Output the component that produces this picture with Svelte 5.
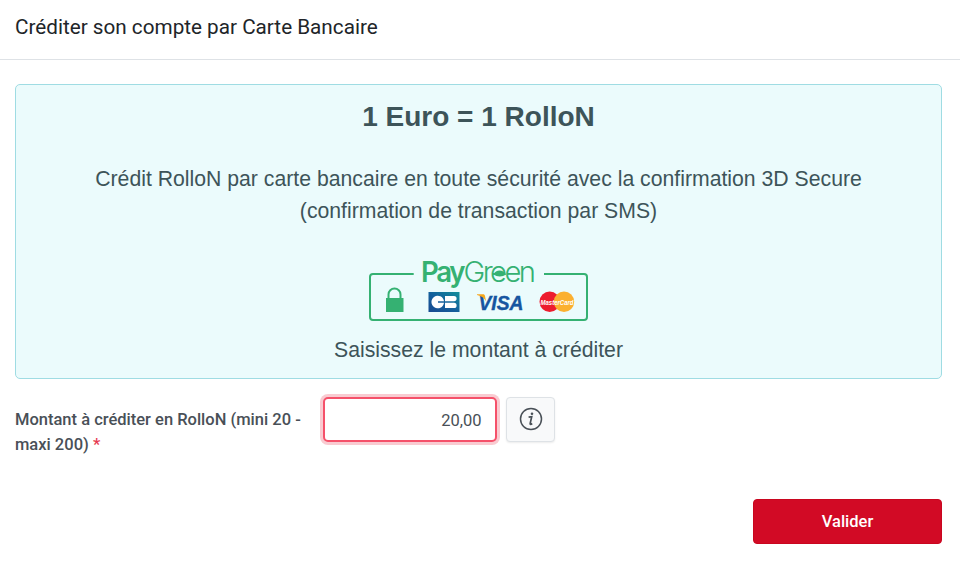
<script lang="ts">
  let amount = $state("20,00");

  function submitCredit(evt: SubmitEvent) {
    evt.preventDefault();
  }
</script>

<header class="modal-header">
  <h1>Créditer son compte par Carte Bancaire</h1>
</header>

<form class="modal-body" onsubmit={submitCredit}>
  <section class="notice">
    <h2>1 Euro = 1 RolloN</h2>
    <p>
      Crédit RolloN par carte bancaire en toute sécurité avec la confirmation 3D Secure<br />
      (confirmation de transaction par SMS)
    </p>
    <svg class="paygreen" width="220" height="64" viewBox="0 0 220 64" role="img" aria-label="PayGreen">
      <defs>
        <linearGradient id="cb" x1="0" x2="1" y1="1" y2="0">
          <stop offset="0" stop-color="#174a91" />
          <stop offset="0.5" stop-color="#14609c" />
          <stop offset="1" stop-color="#12909a" />
        </linearGradient>
      </defs>
      <path class="frame" d="M45.700 16H5a3 3 0 0 0-3 3v40a3 3 0 0 0 3 3h211a3 3 0 0 0 3-3V19a3 3 0 0 0-3-3h-40" />

      <text class="pay" x="53" y="24.300" textLength="42" lengthAdjust="spacingAndGlyphs">Pay</text>
      <text class="green" x="95.500" y="24.300" textLength="70" lengthAdjust="spacingAndGlyphs">Green</text>
      <path class="leaf" d="M125.500 16.500c2-5.500 10-5.500 12.500 0-3.500 2.500-9 2.500-12.500 0z" />

      <path class="shackle" d="M20.500 41v-4.500a6 6 0 0 1 12 0V41" />
      <path class="lock" d="M18 40h17.500v14H18z" />

      <path fill="url(#cb)" d="M60.500 34h31v20h-31z" />
      <path fill="#fff" d="M76 43.200h-6v1.600h6a6.300 6.300 0 1 1 0-1.600zM77 38h9a2.600 2.600 0 0 1 0 5.200h-9zM77 44.800h9a2.600 2.600 0 0 1 0 5.200h-9z" />

      <text class="visa" x="110.500" y="51.500" textLength="45" lengthAdjust="spacingAndGlyphs">VISA</text>
      <path fill="#f6a71c" d="M109 36.300h6c1.200 0 1.800.500 2 1.600l1 5.400c-1.400-3.400-4.600-5.200-9-6.400z" />

      <circle cx="181.700" cy="43.700" r="10.200" fill="#ed1c2e" />
      <circle cx="196" cy="43.700" r="10.200" fill="#fbb030" />
      <text class="mastercard" x="172.500" y="46.600" textLength="33" lengthAdjust="spacingAndGlyphs">MasterCard</text>
    </svg>
    <p class="hint">Saisissez le montant à créditer</p>
  </section>

  <div class="field">
    <label for="amount">Montant à créditer en RolloN (mini 20 - maxi 200) <span class="required">*</span></label>
    <input id="amount" type="text" inputmode="decimal" bind:value={amount} />
    <button class="info" type="button" aria-label="Information">
      <svg width="24" height="24" viewBox="0 0 24 24">
        <circle cx="12" cy="12" r="10.500" />
        <path class="stem" d="M9.600 10.200l3.100-.500-1.500 6.700c-.200 1.200.700 1.200 2 .100" />
        <circle class="dot" cx="13" cy="6.700" r="1.300" />
      </svg>
    </button>
  </div>

  <div class="actions">
    <button class="submit" type="submit">Valider</button>
  </div>
</form>

<style>
  :global(body) {
    margin: 0;
    background: #fff;
    font-family: Roboto, sans-serif;
    overflow: hidden;
  }

  .modal-header {
    display: flex;
    align-items: center;
    box-sizing: border-box;
    height: 60px;
    padding: 0 15px 5px;
    border-bottom: 1px solid #dee2e6;
  }

  h1 {
    margin: 0;
    color: #212529;
    font-size: 20.700px;
    font-weight: 400;
    line-height: 30px;
  }

  .modal-body {
    padding: 24px 18px 0 15px;
  }

  .notice {
    box-sizing: border-box;
    height: 295px;
    padding: 14px 0 0;
    border: 1px solid #9fdce3;
    border-radius: 5px;
    background: #ebfbfc;
    color: #3d5459;
    font-family: "Liberation Sans", Arial, sans-serif;
    text-align: center;
  }

  h2 {
    margin: 0 0 28px;
    font-size: 28px;
    font-weight: 700;
    line-height: 36px;
  }

  p {
    margin: 0;
    font-size: 21.220px;
    line-height: 32px;
  }

  .paygreen {
    display: block;
    margin: 31px auto 0 352px;
    overflow: visible;
  }

  .hint {
    margin-top: 12px;
  }

  .frame,
  .shackle {
    fill: none;
    stroke: #35b172;
    stroke-width: 2;
  }

  .lock,
  .leaf,
  .pay,
  .green {
    fill: #35b172;
  }

  .pay,
  .green {
    font-family: Inter, sans-serif;
    font-size: 28.500px;
    letter-spacing: -2.500px;
  }

  .pay {
    font-weight: 600;
  }

  .green {
    font-weight: 300;
  }

  .visa {
    fill: #1555a0;
    font-family: "Liberation Sans", Arial, sans-serif;
    font-size: 20.800px;
    font-style: italic;
    font-weight: 700;
    stroke: #1555a0;
    stroke-width: 0.4;
  }

  .mastercard {
    fill: #fff;
    font-family: "Liberation Sans", Arial, sans-serif;
    font-size: 7.500px;
    font-style: italic;
    font-weight: 700;
  }

  .field {
    display: flex;
    align-items: flex-start;
    margin-top: 18px;
  }

  label {
    box-sizing: border-box;
    width: 308px;
    padding: 10px 15px 0 0;
    color: #495057;
    font-size: 16.500px;
    font-weight: 500;
    line-height: 25px;
  }

  .required {
    color: #e63950;
  }

  input {
    box-sizing: border-box;
    width: 174px;
    height: 45px;
    padding: 1px 13.500px 0;
    border: 2px solid #f5516a;
    border-radius: 5px;
    outline: none;
    box-shadow: 0 0 0 3px #f9cbd1;
    color: #495057;
    font: 400 16.500px Roboto, sans-serif;
    text-align: right;
  }

  .info {
    display: flex;
    align-items: center;
    justify-content: center;
    box-sizing: border-box;
    width: 49px;
    height: 45px;
    margin-left: 9px;
    padding: 0 0 1px;
    border: 1px solid #dee2e6;
    border-radius: 4px;
    background: #f8f9fa;
    box-shadow: 0 1px 2px rgb(0 0 0 / 8%);
  }

  .info svg {
    fill: none;
    stroke: #495057;
    stroke-width: 1.500;
  }

  .info .stem {
    stroke-width: 1.700;
  }

  .info .dot {
    fill: #495057;
    stroke: none;
  }

  .actions {
    display: flex;
    justify-content: flex-end;
    margin-top: 42px;
  }

  .submit {
    width: 189px;
    height: 45px;
    padding: 0;
    border: 1px solid #c9061f;
    border-radius: 4px;
    background: #d20a25;
    color: #fff;
    font: 500 16.500px Roboto, sans-serif;
  }
</style>
